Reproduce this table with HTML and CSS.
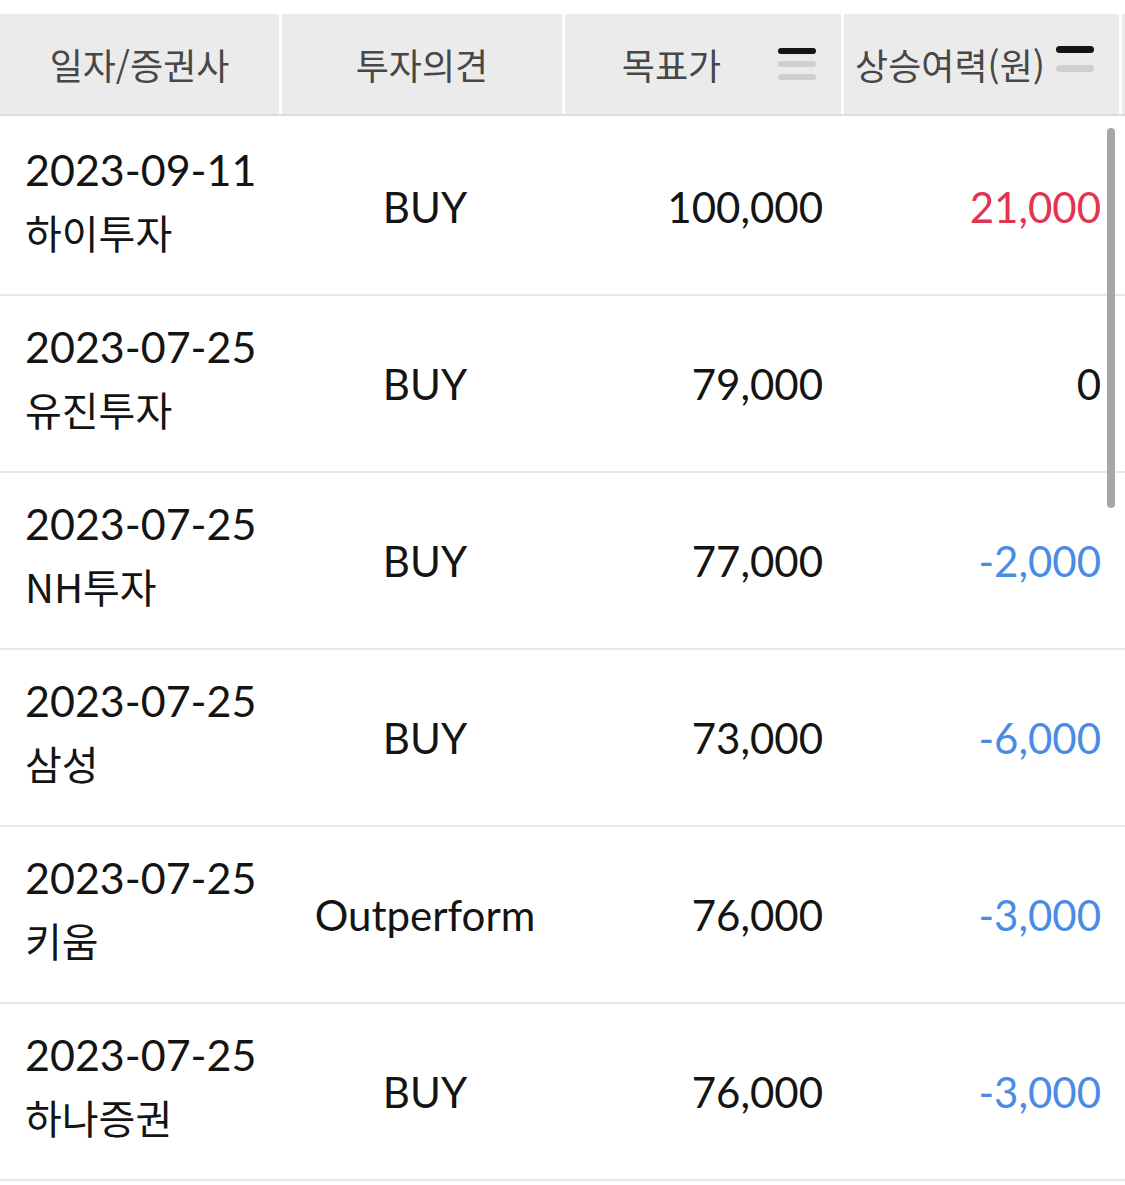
FILE: index.html
```html
<!DOCTYPE html>
<html lang="ko">
<head>
<meta charset="utf-8">
<title>목표가</title>
<link rel="stylesheet" href="styles.css">
</head>
<body>
<div class="board">
  <div class="head">
    <div class="th">일자/증권사</div>
    <div class="th">투자의견</div>
    <div class="th sortable"><span class="label">목표가</span>
      <svg class="sort" width="38" height="32" viewBox="0 0 38 32"><rect x="0" y="0" width="38" height="6" rx="3" fill="#141414"/><rect x="0" y="13" width="38" height="6" rx="3" fill="#cfcfcf"/><rect x="0" y="26" width="38" height="6" rx="3" fill="#cfcfcf"/></svg>
    </div>
    <div class="th sortable"><span class="label">상승여력(원)</span>
      <svg class="sort" width="38" height="27" viewBox="0 0 38 27"><rect x="0" y="0" width="38" height="7" rx="3.5" fill="#141414"/><rect x="0" y="19" width="38" height="7" rx="3.5" fill="#cfcfcf"/></svg>
    </div>
    <div class="th"></div>
  </div>
  <div class="rows">
    <div class="row">
      <div class="td who"><span class="date">2023-09-11</span><span class="broker">하이투자</span></div>
      <div class="td opinion">BUY</div>
      <div class="td num">100,000</div>
      <div class="td num up">21,000</div>
    </div>
    <div class="row">
      <div class="td who"><span class="date">2023-07-25</span><span class="broker">유진투자</span></div>
      <div class="td opinion">BUY</div>
      <div class="td num">79,000</div>
      <div class="td num">0</div>
    </div>
    <div class="row">
      <div class="td who"><span class="date">2023-07-25</span><span class="broker">NH투자</span></div>
      <div class="td opinion">BUY</div>
      <div class="td num">77,000</div>
      <div class="td num down">-2,000</div>
    </div>
    <div class="row">
      <div class="td who"><span class="date">2023-07-25</span><span class="broker">삼성</span></div>
      <div class="td opinion">BUY</div>
      <div class="td num">73,000</div>
      <div class="td num down">-6,000</div>
    </div>
    <div class="row">
      <div class="td who"><span class="date">2023-07-25</span><span class="broker">키움</span></div>
      <div class="td opinion">Outperform</div>
      <div class="td num">76,000</div>
      <div class="td num down">-3,000</div>
    </div>
    <div class="row">
      <div class="td who"><span class="date">2023-07-25</span><span class="broker">하나증권</span></div>
      <div class="td opinion">BUY</div>
      <div class="td num">76,000</div>
      <div class="td num down">-3,000</div>
    </div>
    <div class="scrollbar"></div>
  </div>
</div>
</body>
</html>
```
FILE: styles.css
```css
html, body {
  margin: 0;
  padding: 0;
  background: #ffffff;
}
body {
  font-family: Lato, "Noto Sans CJK KR", sans-serif;
  color: #141414;
  overflow: hidden;
}
.board {
  padding-top: 14px;
  width: 1125px;
}
.head {
  display: grid;
  grid-template-columns: 279px 280px 276px 275px 1fr;
  column-gap: 3px;
  border-bottom: 2px solid #dcdcdc;
}
.th {
  height: 100px;
  background: #ebebeb;
  display: flex;
  align-items: center;
  justify-content: center;
  font-family: "Noto Sans CJK KR", sans-serif;
  font-size: 36px;
  color: #474747;
}
.th.sortable {
  justify-content: space-between;
  padding-right: 25px;
}
.th .label {
  flex: 1;
  text-align: center;
}
.sort {
  display: block;
  flex: none;
}
.th.sortable:nth-child(4) .sort {
  margin-top: -10px;
}
.rows {
  position: relative;
  padding-top: 3px;
}
.row {
  display: grid;
  grid-template-columns: 279px 280px 276px 275px 1fr;
  column-gap: 3px;
  height: 175px;
  border-bottom: 2px solid #e8e8e8;
}
.td {
  display: flex;
  align-items: center;
  font-size: 42px;
}
.who {
  flex-direction: column;
  align-items: flex-start;
  justify-content: center;
  padding-left: 25px;
  padding-bottom: 12px;
}
.date {
  font-size: 43px;
  line-height: 63px;
}
.broker {
  font-family: "Noto Sans CJK KR", sans-serif;
  font-size: 40px;
  line-height: 63px;
}
.opinion {
  justify-content: center;
  padding-left: 6px;
}
.num {
  justify-content: flex-end;
  padding-right: 18px;
}
.up {
  color: #e2344e;
}
.down {
  color: #4a8be6;
}
.scrollbar {
  position: absolute;
  left: 1107px;
  top: 12px;
  width: 8px;
  height: 380px;
  border-radius: 4px;
  background: #a7a7a7;
}
```
